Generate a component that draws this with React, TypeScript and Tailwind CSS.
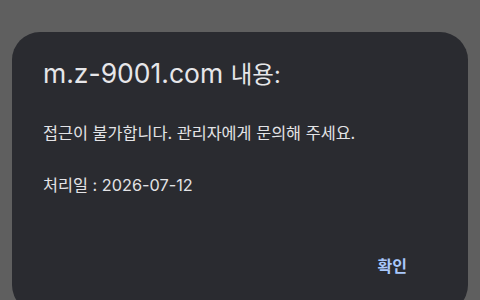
export default function App() {
  return (
    <div
      className="h-[300px] w-[480px] overflow-hidden bg-[#5f5f5f] px-[12px] pt-[32px]"
      style={{ fontFamily: 'Inter, "Noto Sans CJK KR", sans-serif' }}
    >
      <div className="flex h-[281px] flex-col rounded-[28px] bg-[#2a2b30] px-[31px] pt-[25px]">
        <h1 className="whitespace-nowrap text-[26.5px] leading-[32px] text-[#e6e6e9]">
          m.z-9001.com <span className="text-[23.5px]">내용:</span>
        </h1>
        <p className="mt-[29px] whitespace-pre-line text-[16.3px] leading-[26px] text-[#e3e3e6]">
          {'접근이 불가합니다. 관리자에게 문의해 주세요.\n\n처리일 : 2026-07-12'}
        </p>
        <div className="mt-auto flex justify-end pb-[37px] pr-[30px]">
          <button className="text-[16px] font-bold leading-[20px] text-[#a8c7fa]">확인</button>
        </div>
      </div>
    </div>
  )
}
